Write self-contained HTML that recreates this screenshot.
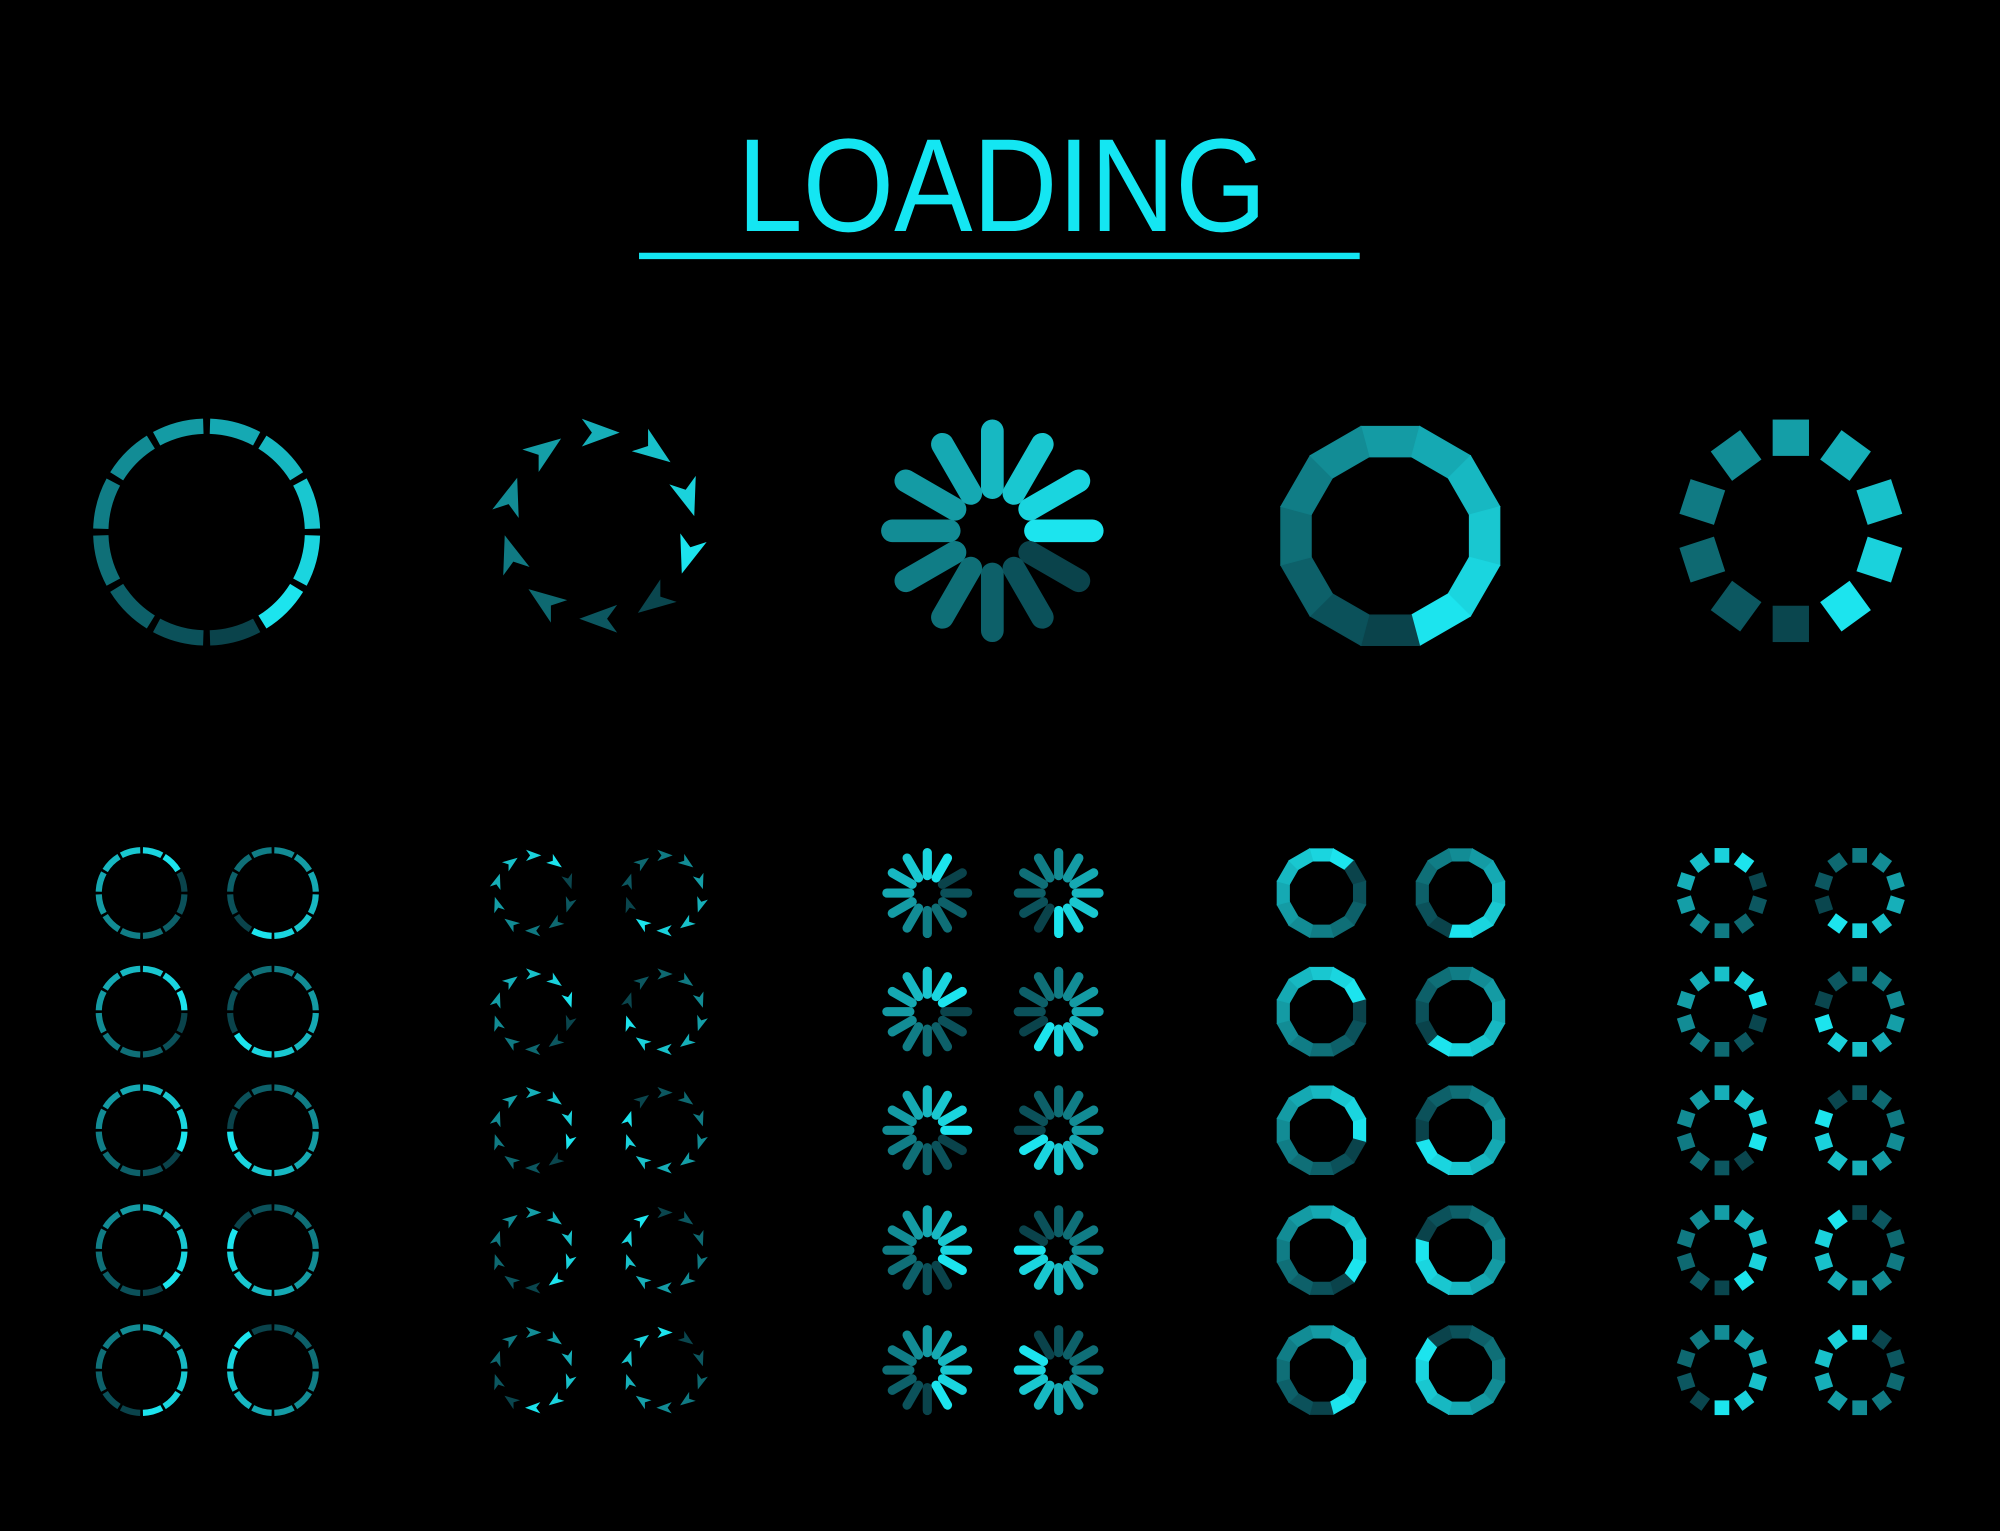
<!DOCTYPE html>
<html><head><meta charset="utf-8"><style>
html,body{margin:0;padding:0;background:#000;width:2000px;height:1531px;overflow:hidden}
svg{display:block}
</style></head><body>
<svg id="s" width="2000" height="1531" viewBox="0 0 1568 1200" xmlns="http://www.w3.org/2000/svg">
<rect width="1568" height="1200" fill="#000"/>
<text x="578" y="181" textLength="415" lengthAdjust="spacingAndGlyphs" font-family="Liberation Sans, sans-serif" font-size="104" fill="#14e6f2">LOADING</text>
<rect x="501" y="198" width="565" height="5" fill="#14e6f2"/>
<g id="g"></g>
</svg>
<script>
var g=document.getElementById('g'),out='';
function col(t){var a=[8,52,60],b=[28,228,238];return 'rgb('+a.map(function(v,i){return Math.round(v+(b[i]-v)*t)}).join(',')+')';}
function bright(i,n,peak){var d=((peak-i)%n+n)%n;return 1-d/n;}
function P(cx,cy,r,a){return [cx+r*Math.cos(a),cy+r*Math.sin(a)];}
function ring(cx,cy,R,peak){var w=R*0.135,r=R-w/2;for(var i=0;i<12;i++){var a0=(i*30+1.8-90)*Math.PI/180,a1=((i+1)*30-1.8-90)*Math.PI/180;var p=P(cx,cy,r,a0),q=P(cx,cy,r,a1);out+='<path d="M'+p+' A'+r+' '+r+' 0 0 1 '+q+'" fill="none" stroke="'+col(bright(i,12,peak))+'" stroke-width="'+w+'"/>';}}
function arrows(cx,cy,R,peak){var r=R*0.82,s=R/90;for(var i=0;i<10;i++){var a=i*36-90;var p=P(cx,cy,r,a*Math.PI/180);out+='<path transform="translate('+p+') rotate('+(a+90)+') scale('+s+')" d="M16 0 L-14 -11 L-6 0 L-14 11 Z" fill="'+col(bright(i,10,peak))+'"/>';}}
function spin(cx,cy,R,peak){for(var i=0;i<12;i++){var a=(i*30-90)*Math.PI/180;var p=P(cx,cy,R*0.38,a),q=P(cx,cy,R*0.88,a);out+='<line x1="'+p[0]+'" y1="'+p[1]+'" x2="'+q[0]+'" y2="'+q[1]+'" stroke="'+col(bright(i,12,peak))+'" stroke-width="'+(R*0.2)+'" stroke-linecap="round"/>';}}
function dodec(cx,cy,R,peak){var ri=R*0.72;for(var i=0;i<12;i++){var a0=(i*30-90-15)*Math.PI/180,a1=(i*30-90+15)*Math.PI/180;var o0=P(cx,cy,R,a0),o1=P(cx,cy,R,a1),i1=P(cx,cy,ri,a1),i0=P(cx,cy,ri,a0);var c=col(bright(i,12,peak));out+='<path d="M'+o0+' L'+o1+' L'+i1+' L'+i0+' Z" fill="'+c+'" stroke="'+c+'" stroke-width="0.6"/>';}}
function squares(cx,cy,R,peak){var r=R*0.82,s=R*0.32;for(var i=0;i<10;i++){var a=i*36-90;var p=P(cx,cy,r,a*Math.PI/180);out+='<rect x="'+(-s/2)+'" y="'+(-s/2)+'" width="'+s+'" height="'+s+'" transform="translate('+p+') rotate('+a+')" fill="'+col(bright(i,10,peak))+'"/>';}}
var fns=[ring,arrows,spin,dodec,squares];
var big=[[162,417],[470,412],[778,416],[1090,420],[1404,416]];
var peaks=[4,3,3,5,4],ns=[12,10,12,12,10];
for(var k=0;k<5;k++)fns[k](big[k][0],big[k][1],89,peaks[k]);
var cols=[[111,214],[418,521],[727,830],[1036,1145],[1350,1458]];
var rows=[700,793,886,980,1074];
for(var k=0;k<5;k++)for(var c=0;c<2;c++)for(var r=0;r<5;r++){var idx=c*5+r;fns[k](cols[k][c],rows[r],36,(idx+1)%ns[k]);}
g.innerHTML=out;
</script>
</body></html>
